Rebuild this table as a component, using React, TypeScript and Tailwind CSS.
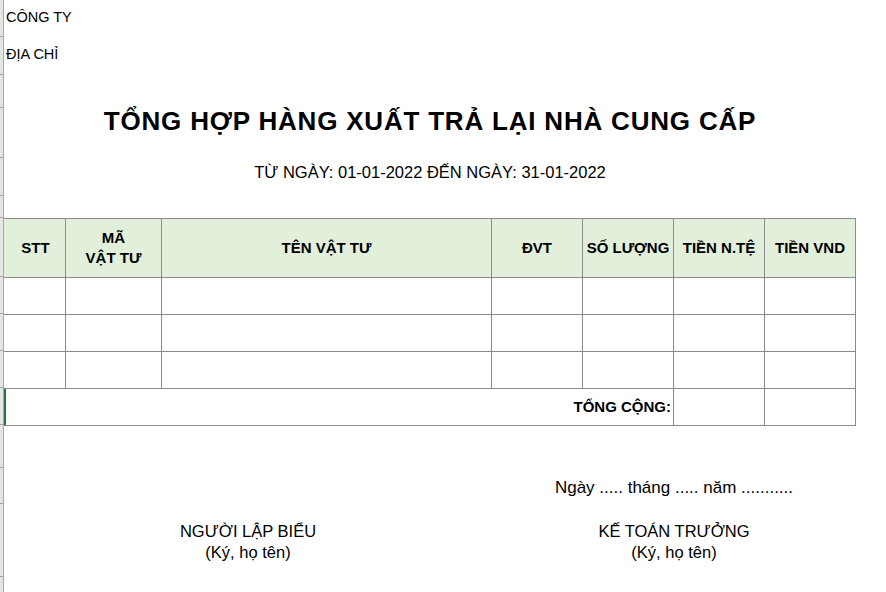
import React from "react";

const cols = "grid grid-cols-[62px_96px_330px_91px_91px_91px_91px]";
const cell = "border-r border-b border-[#8a8a8a]";

function Strip() {
  const heights = [37, 38, 33, 50, 38, 22, 59, 37, 37, 37, 37, 43, 36, 73, 20];
  return (
    <div className="flex w-[4px] shrink-0 flex-col border-r border-[#a8a8a8] bg-[#e4e4e4]">
      {heights.map((h, i) => (
        <div key={i} style={{ height: h }} className="border-b border-[#a0a0a0] shrink-0" />
      ))}
    </div>
  );
}

export default function App() {
  const headers = [
    { t: "STT" },
    { t: "MÃ\nVẬT TƯ" },
    { t: "TÊN VẬT TƯ" },
    { t: "ĐVT" },
    { t: "SỐ LƯỢNG" },
    { t: "TIỀN N.TỆ" },
    { t: "TIỀN VND" },
  ];
  return (
    <div
      className="flex h-[592px] w-[886px] overflow-hidden bg-white text-black"
      style={{ fontFamily: '"Liberation Sans", Arial, sans-serif' }}
    >
      <Strip />
      <div className="flex w-[852px] flex-col">
        <div className="flex h-[36px] items-center pl-[2px] text-[14.5px]">CÔNG TY</div>
        <div className="flex h-[37px] items-center pl-[2px] text-[14.5px]">ĐỊA CHỈ</div>
        <div className="h-[22px]" />
        <div className="flex h-[52px] items-center justify-center text-[26px] font-bold tracking-[0.8px]">
          TỔNG HỢP HÀNG XUẤT TRẢ LẠI NHÀ CUNG CẤP
        </div>
        <div className="flex h-[50px] items-center justify-center text-[16.5px]">
          TỪ NGÀY: 01-01-2022 ĐẾN NGÀY: 31-01-2022
        </div>
        <div className="h-[21px]" />
        <div className="border-t border-[#8a8a8a]">
          <div className={`${cols} h-[59px] bg-[#e2efda] text-[15px] font-bold`}>
            {headers.map((h, i) => (
              <div
                key={i}
                className={`${cell} flex items-center justify-center whitespace-pre-line text-center leading-[20px] ${i === 0 ? "pl-[2px]" : ""}`}
              >
                {h.t}
              </div>
            ))}
          </div>
          {[0, 1, 2].map((r) => (
            <div key={r} className={`${cols} h-[37px]`}>
              {headers.map((_, i) => (
                <div key={i} className={cell} />
              ))}
            </div>
          ))}
          <div className={`${cols} h-[37px]`}>
            <div className={`${cell} col-span-5 flex items-center justify-end pr-[2px] text-[15px] font-bold shadow-[inset_2px_0_0_#217346]`}>
              TỔNG CỘNG:
            </div>
            <div className={cell} />
            <div className={cell} />
          </div>
        </div>
        <div className="h-[44px]" />
        <div className="grid grid-cols-[488px_364px] text-[17px]">
          <div />
          <div className="flex h-[36px] items-center justify-center">Ngày ..... tháng ..... năm ...........</div>
        </div>
        <div className="h-[15px]" />
        <div className="grid grid-cols-[488px_364px] text-[16.5px] leading-[21px]">
          <div className="flex flex-col items-center">
            <div>NGƯỜI LẬP BIỂU</div>
            <div>(Ký, họ tên)</div>
          </div>
          <div className="flex flex-col items-center">
            <div>KẾ TOÁN TRƯỞNG</div>
            <div>(Ký, họ tên)</div>
          </div>
        </div>
      </div>
    </div>
  );
}
